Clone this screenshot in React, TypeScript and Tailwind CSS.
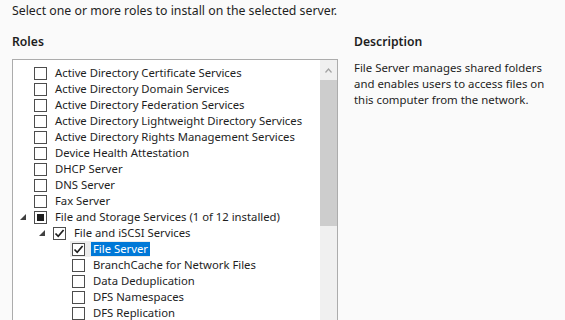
import React from "react";

type Role = {
  label: string;
  level: 0 | 1 | 2;
  state?: "checked" | "partial";
  expanded?: boolean;
  selected?: boolean;
};

const roles: Role[] = [
  { label: "Active Directory Certificate Services", level: 0 },
  { label: "Active Directory Domain Services", level: 0 },
  { label: "Active Directory Federation Services", level: 0 },
  { label: "Active Directory Lightweight Directory Services", level: 0 },
  { label: "Active Directory Rights Management Services", level: 0 },
  { label: "Device Health Attestation", level: 0 },
  { label: "DHCP Server", level: 0 },
  { label: "DNS Server", level: 0 },
  { label: "Fax Server", level: 0 },
  { label: "File and Storage Services (1 of 12 installed)", level: 0, state: "partial", expanded: true },
  { label: "File and iSCSI Services", level: 1, state: "checked", expanded: true },
  { label: "File Server", level: 2, state: "checked", selected: true },
  { label: "BranchCache for Network Files", level: 2 },
  { label: "Data Deduplication", level: 2 },
  { label: "DFS Namespaces", level: 2 },
  { label: "DFS Replication", level: 2 },
];

const indent = ["pl-[4px]", "pl-[23px]", "pl-[42px]"];

function Expander() {
  return (
    <svg width="6" height="6" viewBox="0 0 6 6" className="ml-[3px]">
      <polygon points="6,0 6,6 0,6" fill="#404040" />
    </svg>
  );
}

function Box({ state }: { state?: Role["state"] }) {
  return (
    <span className="flex h-[13px] w-[13px] shrink-0 items-center justify-center border border-[#4d4d4d] bg-white">
      {state === "partial" && <span className="h-[7px] w-[7px] bg-[#1e1e1e]" />}
      {state === "checked" && (
        <svg width="11" height="11" viewBox="0 0 11 11">
          <polyline points="1.5,5.5 4.2,8.3 9.6,2" fill="none" stroke="#1e1e1e" strokeWidth="1.7" />
        </svg>
      )}
    </span>
  );
}

function RoleRow({ role }: { role: Role }) {
  return (
    <div className={`flex h-4 items-center ${indent[role.level]}`}>
      <span className="flex w-[17px] shrink-0 items-center">{role.expanded && <Expander />}</span>
      <span className={`flex h-4 items-center ${role.selected ? "bg-[#ececec] pl-[2px] -ml-[2px]" : ""}`}>
        <Box state={role.state} />
        <span
          className={`ml-[6px] whitespace-nowrap px-[2px] leading-[14px] ${
            role.selected ? "bg-[#0078d7] text-white" : ""
          }`}
        >
          {role.label}
        </span>
      </span>
    </div>
  );
}

export default function App() {
  return (
    <div className="h-[320px] w-[565px] overflow-hidden bg-[#fafafa] font-['Segoe_UI','Noto_Sans',sans-serif] text-[11.3px] leading-4 text-[#1e1e1e]">
      <p className="pl-3 pt-[3px] text-[12.3px]">Select one or more roles to install on the selected server.</p>
      <div className="mt-[15px] flex">
        <div className="ml-3 w-[326px] shrink-0">
          <h2 className="mb-[9px] text-[12.2px] font-semibold">Roles</h2>
          <div className="flex h-[300px] border border-[#acacac] bg-white">
            <div className="flex-1 overflow-hidden pt-[5px]">
              {roles.map((r) => (
                <RoleRow key={r.label} role={r} />
              ))}
            </div>
            <div className="flex w-[17px] flex-col bg-[#f0f0f0]">
              <div className="flex h-[20px] items-center justify-center">
                <svg width="7" height="5" viewBox="0 0 7 5">
                  <polyline points="0.5,4.5 3.5,1 6.5,4.5" fill="none" stroke="#a3a3a3" strokeWidth="1.2" />
                </svg>
              </div>
              <div className="h-[146px] bg-[#cdcdcd]" />
            </div>
          </div>
        </div>
        <div className="ml-4 flex-1">
          <h2 className="mb-[9px] text-[12.2px] font-semibold">Description</h2>
          <p className="pt-px text-[11.4px]">
            <span className="block">File Server manages shared folders</span>
            <span className="block">and enables users to access files on</span>
            <span className="block">this computer from the network.</span>
          </p>
        </div>
      </div>
    </div>
  );
}
